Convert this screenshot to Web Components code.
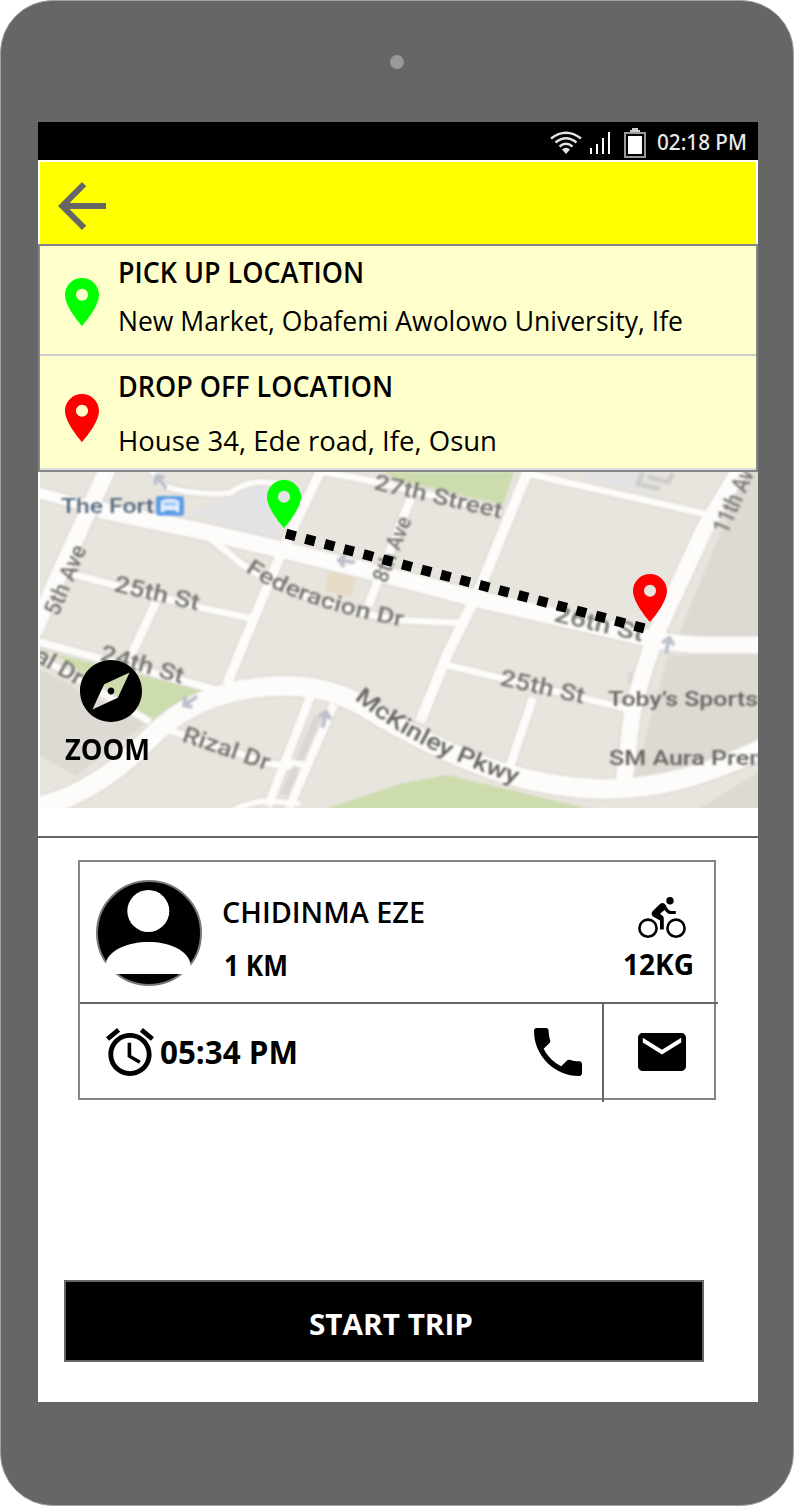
<!DOCTYPE html>
<html lang="en">
<head>
<meta charset="utf-8">
<title>Start trip</title>
<style>
html,body{margin:0;padding:0;background:#fff}
body{font-family:"Open Sans","Noto Sans",sans-serif;color:#000}
</style>
</head>
<body>
<device-frame>
  <status-bar time="02:18 PM"></status-bar>
  <app-header></app-header>
  <location-list>
    <location-row color="#00ff00" style="--h:108px;--pin:32px;--title:17px;--gap:28px">
      <ink-text slot="title" w="245" h="20" weight="600">PICK UP LOCATION</ink-text>
      <ink-text slot="address" w="564" h="20" weight="400">New Market, Obafemi Awolowo University, Ife</ink-text>
    </location-row>
    <location-row color="#ff0000" style="--h:112px;--pin:38px;--title:21px;--gap:34px">
      <ink-text slot="title" w="274" h="20" weight="600">DROP OFF LOCATION</ink-text>
      <ink-text slot="address" w="378" h="20" weight="400">House 34, Ede road, Ife, Osun</ink-text>
    </location-row>
  </location-list>
  <trip-map></trip-map>
  <rider-card></rider-card>
  <start-button><ink-text w="163" h="21" weight="700">START TRIP</ink-text></start-button>
</device-frame>

<script>
const define = (name, html, init) => customElements.define(name, class extends HTMLElement {
  connectedCallback() {
    if (this.shadowRoot) return;
    const t = document.createElement('template');
    t.innerHTML = typeof html === 'function' ? html(this) : html;
    this.attachShadow({mode: 'open'}).appendChild(t.content.cloneNode(true));
    if (init) init(this);
  }
});

const ICONS = {
  pin: ['5 2 14 20', '<path d="M12 2C8.13 2 5 5.13 5 9c0 5.25 7 13 7 13s7-7.75 7-13c0-3.87-3.13-7-7-7zm0 9.5a2.5 2.5 0 1 1 0-5 2.5 2.5 0 0 1 0 5z"/>'],
  back: ['4 4 16 16', '<path d="M20 11H7.83l5.59-5.59L12 4l-8 8 8 8 1.41-1.41L7.83 13H20v-2z"/>'],
  compass: ['2 2 20 20', '<path d="M12 10.9c-.61 0-1.1.49-1.1 1.1s.49 1.1 1.1 1.1c.61 0 1.1-.49 1.1-1.1s-.49-1.1-1.1-1.1zM12 2C6.48 2 2 6.48 2 12s4.48 10 10 10 10-4.48 10-10S17.52 2 12 2zm2.19 12.19L6 18l3.81-8.19L18 6l-3.81 8.19z"/>'],
  bike: ['0 1 24 22', '<circle cx="16" cy="3.4" r="1.85"/><g fill="none" stroke="currentColor" stroke-width="1.3"><circle cx="5" cy="17.1" r="4.3"/><circle cx="19" cy="17.1" r="4.3"/></g><path d="M7.3 8.6L11 5Q12.6 3.8 13.8 5.4L14.6 7Q15.4 8.4 16.4 8.5H18.9V10H15.6Q14.6 9.8 13.3 8L11 9.9 12.4 11Q12.9 11.4 12.9 12.2V17.8H11V13.3L7.5 11.2Q6.2 10 7.3 8.6z"/>'],
  alarm: ['2 1.86 20 20.14', '<path d="M22 5.72l-4.6-3.86-1.29 1.53 4.6 3.86L22 5.72zM7.88 3.39L6.6 1.86 2 5.71l1.29 1.53 4.59-3.85zM12.5 8H11v6l4.75 2.85.75-1.23-4-2.37V8zM12 4c-4.97 0-9 4.03-9 9s4.02 9 9 9c4.97 0 9-4.03 9-9s-4.03-9-9-9zm0 16c-3.87 0-7-3.13-7-7s3.13-7 7-7 7 3.13 7 7-3.13 7-7 7z"/>'],
  phone: ['3 3 18 18', '<path d="M6.62 10.79c1.44 2.83 3.76 5.14 6.59 6.59l2.2-2.2c.27-.27.67-.36 1.02-.24 1.12.37 2.33.57 3.57.57.55 0 1 .45 1 1V20c0 .55-.45 1-1 1-9.39 0-17-7.61-17-17 0-.55.45-1 1-1h3.5c.55 0 1 .45 1 1 0 1.25.2 2.45.57 3.57.11.35.03.74-.25 1.02l-2.2 2.2z"/>'],
  mail: ['2 4 20 16', '<path d="M20 4H4c-1.1 0-1.99.9-1.99 2L2 18c0 1.1.9 2 2 2h16c1.1 0 2-.9 2-2V6c0-1.1-.9-2-2-2zm0 4l-8 5-8-5V6l8 5 8-5v2z"/>'],
  avatar: ['96 880 106 106', '<circle cx="149" cy="933" r="52" stroke="#777" stroke-width="2"/><circle cx="148.3" cy="911" r="21" fill="#fff"/><path fill="#fff" d="M105.5 974V964C108 950 128 942 148.5 942S188 950 190.5 964V974z"/>']
};
define('ui-icon', el => {
  const [box, body] = ICONS[el.getAttribute('name')];
  return `<style>:host{display:block;flex:none;line-height:0}svg{display:block}</style>
  <svg width="${el.getAttribute('w')}" height="${el.getAttribute('h')}" viewBox="${box}" preserveAspectRatio="none" fill="currentColor">${body}</svg>`;
});

/* A line of lettering whose box is its cap height, fitted to a set width. */
define('ink-text', el => {
  const w = el.getAttribute('w'), h = +el.getAttribute('h');
  return `<style>:host{display:block;flex:none;width:${w}px;height:${h}px}svg{display:block;overflow:visible}
  text{font-family:"Open Sans","Noto Sans",sans-serif;font-weight:${el.getAttribute('weight')};font-size:${h / .714}px;fill:currentColor}</style>
  <svg width="${w}" height="${h}"><text x="-1" y="${h}" textLength="${+w + 1}" lengthAdjust="spacingAndGlyphs">${el.textContent}</text></svg>`;
});

define('device-frame', `<style>
:host{display:block;box-sizing:border-box;width:794px;height:1506px;background:#666;border:1px solid #a0a0a0;border-radius:53px;padding:0 35px 0 37px}
.top{height:121px;display:flex;justify-content:center}
.cam{width:14px;height:14px;border-radius:50%;background:#999;margin:54px 2px 0 0}
.screen{height:1280px;background:#fff;display:flex;flex-direction:column;overflow:hidden}
</style><div class="top"><div class="cam"></div></div><div class="screen"><slot></slot></div>`);

define('status-bar', el => `<style>
:host{display:flex;height:38px;background:#000;justify-content:flex-end;flex:none}
svg{display:block}
text{font:500 22px "Noto Sans",sans-serif;fill:#e8e8e8}
</style><svg width="220" height="38" viewBox="538 122 220 38">
<g fill="none" stroke="#e4e4e4" stroke-width="2.4"><path d="M551 138.500Q566 127 581 138.500"/><path d="M555.500 142.500Q566 134 576.500 142.500"/><path d="M559.500 146.500Q566 141 572.500 146.500"/></g>
<path d="M562 149.500Q566 146 570 149.500L566 154z" fill="#e4e4e4"/>
<g fill="#fff"><path d="M590 148h2v6h-2zM596 144h2v10h-2zM602 138h2v16h-2zM608 132h2v22h-2z"/><path d="M628 136h14v18h-14z"/></g>
<path d="M632 128h6v2h2v2h-10v-2h2z" fill="#ccc"/><path d="M625 133h20v24h-20z" fill="none" stroke="#999" stroke-width="2"/>
<text x="657" y="150" textLength="90" lengthAdjust="spacingAndGlyphs">${el.getAttribute('time')}</text></svg>`);

define('app-header', `<style>
:host{display:flex;flex:none;height:82px;margin:2px 2px 0;background:#ff0;color:#666;align-items:flex-start}
ui-icon{margin:20px 0 0 18px}
</style><ui-icon name="back" w="48" h="48"></ui-icon>`);

define('location-list', `<style>
:host{display:block;flex:none;box-sizing:border-box;height:228px;border:2px solid #858585;background:#ffc}
</style><slot></slot>`);

define('location-row', el => `<style>
:host{display:flex;height:var(--h);border-bottom:2px solid #ccc;align-items:flex-start}
:host(:last-child){border-bottom-color:#ddd}
ui-icon{color:${el.getAttribute('color')};margin:var(--pin) 20px 0 25px}
.text{display:flex;flex-direction:column;gap:var(--gap);padding-top:var(--title)}
</style><ui-icon name="pin" w="34" h="48"></ui-icon><div class="text"><slot name="title"></slot><slot name="address"></slot></div>`);

const ROADS = [
  [17, 'M108 468L58 577 34 632'],
  [11, 'M36 492L110 512'],
  [17, 'M100 510L210 533 283 550 397 578 473 598 643 637Q665 643 700 645L762 645'],
  [6, 'M151 470L163 486Q195 496 230 493 245 482 262 482L290 484'],
  [10, 'M321 470L283 549 240 652 227 684'],
  [7, 'M318 471L377 482 500 512'],
  [9, 'M368 606L412 495'],
  [11, 'M529 468L480 588 447 655 420 722'],
  [7, 'M525 473L710 515'],
  [17, 'M742 466L704 530 657 632 Q640 680 632 715L624 782'],
  [7, 'M447 665L628 709'],
  [9, 'M533 698L507 775'],
  [7, 'M205 534L243 565Q300 603 397 620L460 623'],
  [7, 'M72 574L197 607 250 618'],
  [9, 'M156 602L128 662'],
  [8, 'M36 641L120 664 217 690'],
  [7, 'M36 655L90 686 150 722'],
  [7, 'M160 727L267 763 300 768'],
  [9, 'M311 695L268 806'],
  [9, 'M334 704L289 808'],
  [6, 'M230 812Q250 801 270 801L300 804'],
  [20, 'M34 808C90 795 125 763 150 738 185 702 230 686 285 686 345 686 365 710 405 730 470 765 530 787 600 789 660 790 710 773 764 748']
];
const roads = (extra, color) => ROADS.map(([w, d]) => `<path d="${d}" stroke="${color}" stroke-width="${w + extra}"/>`).join('');
const label = (x, y, a, len, size, t, fill = '#77756f') =>
  `<text transform="translate(${x} ${y}) rotate(${a})" font-size="${size}" textLength="${len}" lengthAdjust="spacingAndGlyphs" fill="${fill}">${t}</text>`;
const arrow = (x, y, a) => `<path transform="translate(${x} ${y}) rotate(${a})" d="M0 10V-4M-6 0L0 -6 6 0" fill="none" stroke="#bcc0cc" stroke-width="4"/>`;

define('trip-map', `<style>
:host{display:block;position:relative;flex:none;height:336px;padding-left:2px}
svg.base{display:block}
svg.base text{font-family:Roboto,sans-serif;font-weight:500}
.over{position:absolute}
.g{left:229px;top:8px;color:#0f0}.r{left:595px;top:102px;color:#f00}
.c{left:42px;top:188px}.z{left:28px;top:268px}
</style>
<svg class="base" width="718" height="336" viewBox="40 472 718 336">
<defs><filter id="soft" filterUnits="userSpaceOnUse" x="20" y="450" width="760" height="380"><feGaussianBlur stdDeviation="1"/></filter>
<path id="fed" d="M245 571Q292 606 410 628"/><path id="mck" d="M354 699C390 728 430 755 530 789"/></defs>
<rect x="40" y="472" width="718" height="336" fill="#e8e4de"/>
<g filter="url(#soft)">
<path fill="#dddad4" d="M745 472H770V636H678zM668 655H770V745Q700 775 634 779zM30 664L145 724 76 776 30 750zM700 808L770 765V820H640z"/>
<path fill="#e3e3e5" d="M190 513L235 496 262 484 305 488 272 540zM590 472H665L650 494 585 478z"/>
<path fill="#ccdcad" d="M384 472H514L503 505 398 480zM55 654L204 690 153 720zM325 809L400 784 447 775 590 809z"/>
<path fill="#d9ddc4" d="M40 648L50 650 44 662z"/>
<rect x="326" y="574" width="28" height="20" fill="#e6dcc6" transform="rotate(13 340 584)"/>
<rect x="628" y="672" width="10" height="13" fill="#dcd8d2"/>
<path fill="none" stroke="#d1cec9" stroke-width="5" d="M643 472L638 484 660 489M648 477L668 482 673 473"/>
<g fill="none">${roads(2.4, '#d8d4cd')}${roads(0, '#fdfcfa')}</g>
<path d="M318 716L284 795" stroke="#dad7d1" stroke-width="7"/>
<path d="M281 760L308 766" stroke="#fdfcfa" stroke-width="6"/>
${arrow(160, 481, -40)}${arrow(345, 561, -82)}${arrow(668, 644, 12)}${arrow(189, 702, -125)}${arrow(325, 718, 14)}
<rect x="156" y="496" width="28" height="20" rx="3" fill="#5b9fe6"/><path fill="#e4efff" d="M161 502Q162 499 170 499T179 502V512H176V510H164V512H161z"/><path fill="#a9ccf5" d="M163.500 502h13v4h-13z"/>
</g>
<g filter="url(#soft)">
${label(61, 513, 0, 93, 20, 'The Fort', '#54677d')}
${label(58, 617, -67, 74, 23, '5th Ave')}
${label(113, 591, 13, 87, 23, '25th St')}
${label(373, 489, 13, 131, 22, '27th Street')}
${label(386, 584, -68, 69, 22, '8th Ave')}
${label(727, 535, -66, 78, 23, '11th Ave')}
${label(553, 621, 13, 91, 23, '26th St')}
${label(499, 685, 12.500, 86, 23, '25th St')}
${label(608, 706, 0, 150, 20, 'Toby’s Sports', '#66645f')}
${label(609, 765, 0, 162, 20, 'SM Aura Prem', '#66645f')}
${label(181, 741, 19, 91, 23, 'Rizal Dr')}
${label(33, 660, 30, 52, 23, 'al Dr')}
${label(99, 660, 16, 86, 23, '24th St')}
<text font-size="22" fill="#77756f" textLength="168" lengthAdjust="spacingAndGlyphs"><textPath href="#fed" textLength="168" lengthAdjust="spacingAndGlyphs">Federacion Dr</textPath></text>
<text font-size="23" fill="#66645f" textLength="184" lengthAdjust="spacingAndGlyphs"><textPath href="#mck" textLength="184" lengthAdjust="spacingAndGlyphs">McKinley Pkwy</textPath></text>
</g>
<path d="M286 533.700L644.500 628.500" stroke="#000" stroke-width="10" stroke-dasharray="10 10.030"/>
</svg>
<ui-icon class="over g" name="pin" w="34" h="48"></ui-icon>
<ui-icon class="over r" name="pin" w="34" h="48"></ui-icon>
<ui-icon class="over c" name="compass" w="62" h="62"></ui-icon>
<ink-text class="over z" w="84" h="20" weight="700">ZOOM</ink-text>`);

define('rider-card', `<style>
:host{display:block;flex:none;margin-top:28px;border-top:2px solid #666;padding:22px 0 0 40px}
.card{box-sizing:border-box;width:638px;height:240px;border:2px solid #858585;display:flex;flex-direction:column}
.top{display:flex;height:140px;flex:none;align-items:flex-start}
.top>ui-icon{margin:18px 0 0 16px}
.who{display:flex;flex-direction:column;gap:33px;padding:41px 0 0 21px;flex:1}
.who ink-text+ink-text{margin-left:2px}
.load{width:70px;margin:34px 20px 0 0;display:flex;flex-direction:column;align-items:center;gap:15px}
.load ui-icon{margin-left:5px}
.bottom{display:flex;height:96px;width:638px;border-top:2px solid #666;align-items:flex-start}
.time{display:flex;width:522px;align-items:flex-start}
.time ui-icon:first-child{margin:24px 7px 0 26px}
.time ink-text{margin-top:37px}
.time ui-icon:last-child{margin:24px 0 0 236px}
.mail{border-left:2px solid #666;height:98px}
.mail ui-icon{margin:29px 0 0 34px}
</style>
<div class="card"><div class="top"><ui-icon name="avatar" w="106" h="106"></ui-icon>
<div class="who"><ink-text w="202" h="20" weight="600">CHIDINMA EZE</ink-text><ink-text w="63" h="20" weight="700">1 KM</ink-text></div>
<div class="load"><ui-icon name="bike" w="48" h="44"></ui-icon><ink-text w="70" h="20" weight="700">12KG</ink-text></div></div>
<div class="bottom"><div class="time"><ui-icon name="alarm" w="48" h="48"></ui-icon><ink-text w="137" h="23" weight="700">05:34 PM</ink-text><ui-icon name="phone" w="48" h="48"></ui-icon></div>
<div class="mail"><ui-icon name="mail" w="48" h="38"></ui-icon></div></div></div>`);

define('start-button', `<style>
:host{display:flex;flex:none;box-sizing:border-box;width:640px;height:82px;margin:180px 0 0 26px;border:2px solid #666;background:#000;color:#fff;align-items:flex-start}
::slotted(*){margin:32px 0 0 244px}
</style><slot></slot>`);
</script>
</body>
</html>
